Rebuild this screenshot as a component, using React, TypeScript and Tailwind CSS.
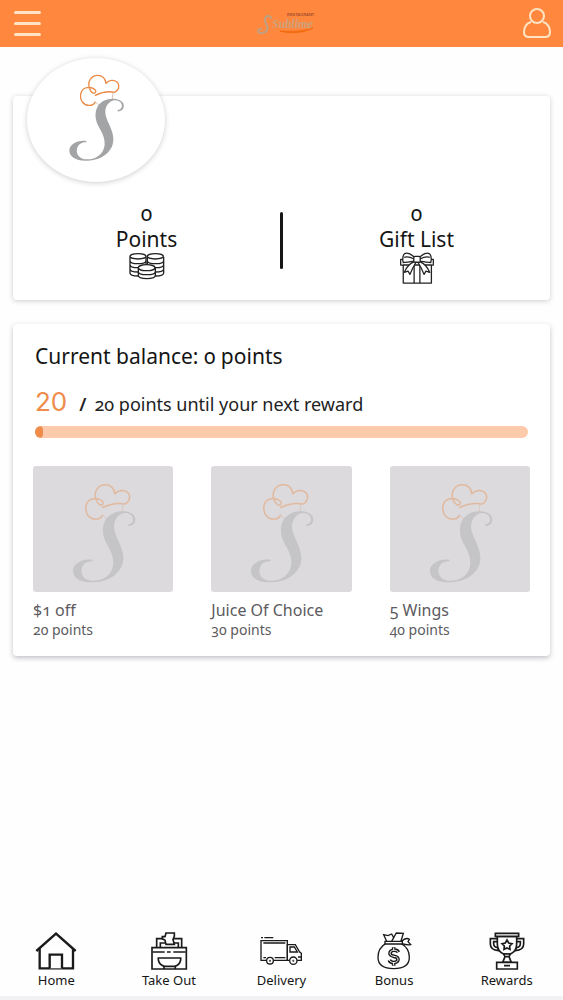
import React from 'react';

type Reward = {
  title: string;
  points: number;
};

type NavItem = {
  label: string;
  icon: React.ReactNode;
};

const rewards: Reward[] = [
  { title: '$1 off', points: 20 },
  { title: 'Juice Of Choice', points: 30 },
  { title: '5 Wings', points: 40 },
];

function ChefLogo({ className }: { className: string }) {
  return (
    <svg viewBox="20 25 177 270" className={className} fill="none" aria-hidden="true">
      <g stroke="#ea8a45" strokeWidth="4" strokeLinecap="round" strokeLinejoin="round">
        <path d="M104 113C97 126 76 125 66 112C56 96 60 72 80 69C94 67 109 74 106 82C102 90 92 84 88 72C80 52 92 32 112 32C127 32 135 42 137 56C145 46 163 43 172 54C180 65 174 78 163 83C145 79 122 84 105 92" />
        <path d="M158 84L156 102M103 110L116 122" strokeWidth="2" stroke="#c9a48a" />
      </g>
      <path
        fill="#a3a4a6"
        d="M172 140C186 142 194 128 189 116C180 100 150 98 130 108C108 120 103 142 107 165C112 190 134 205 133 240C130 268 108 284 80 284C58 284 46 268 50 252C54 238 64 233 78 233L78 229C55 224 28 238 27 256C26 276 46 288 75 288C110 289 140 275 154 248C164 225 158 205 147 180C136 158 130 140 140 122C150 104 172 102 182 114C188 124 184 134 172 136Z"
      />
    </svg>
  );
}

function BrandMark() {
  return (
    <svg viewBox="0 0 60 24" className="h-6 w-[60px]" role="img" aria-label="Restaurant logo">
      <path
        d="M15 6C15 3 9 3 9 8C9 12 13 14 11 18C9 22 2 22 2 19C2 17 4 17 5 17"
        fill="none"
        stroke="#bfa084"
        strokeWidth="2"
        strokeLinecap="round"
      />
      <path d="M24 19C34 22 48 21 57 16C50 19 36 20 24 19Z" fill="#f36c12" stroke="#f36c12" />
      <text x="16" y="16" fontSize="12" fontStyle="italic" fontWeight="700" fontFamily="Liberation Serif, serif" fill="#cda17c">
        Sublime
      </text>
      <text x="31" y="4" fontSize="4" fontWeight="700" fontFamily="Liberation Sans, sans-serif" fill="#a5502f">
        RESTAURANT
      </text>
    </svg>
  );
}

function CoinsIcon() {
  return (
    <svg viewBox="0 0 108 82" className="h-7 w-9" fill="#fff" stroke="#222" strokeWidth="4" aria-hidden="true">
      <path d="M3 13V62C3 74 51 74 51 62V13M3 25C3 37 51 37 51 25M3 37C3 49 51 49 51 37M3 50C3 62 51 62 51 50" />
      <ellipse cx="27" cy="12" rx="24" ry="8" />
      <path d="M55 13V62C55 74 104 74 104 62V13M55 25C55 37 104 37 104 25M55 37C55 49 104 49 104 37M55 50C55 62 104 62 104 50" />
      <ellipse cx="79" cy="12" rx="24" ry="8" />
      <path d="M28 46V69C28 82 79 82 79 69V46M28 58C28 70 79 70 79 58" />
      <ellipse cx="53" cy="46" rx="25" ry="9" />
    </svg>
  );
}

function GiftIcon() {
  return (
    <svg viewBox="0 0 108 100" className="h-8 w-9" fill="#fff" stroke="#222" strokeWidth="4" strokeLinejoin="round" aria-hidden="true">
      <path d="M11 40H99V97H11ZM3 23H105V41H3ZM45 23V97M63 23V97" />
      <path d="M46 17C36 6 22 1 16 5C9 10 9 24 11 33C22 32 37 31 46 28ZM62 17C72 6 86 1 92 5C99 10 99 24 97 33C86 32 71 31 62 28Z" />
      <path d="M14 17C24 13 35 17 45 22M94 17C84 13 73 17 63 22" />
      <path d="M45 30C31 36 20 49 14 64L26 60L32 70C38 54 44 43 51 32ZM63 30C77 36 88 49 94 64L82 60L76 70C70 54 64 43 57 32Z" />
      <rect x="44" y="14" width="20" height="18" rx="3" />
    </svg>
  );
}

function HomeIcon() {
  return (
    <g strokeWidth="7">
      <path d="M14 50V109H114V50" />
      <path d="M44 109V68H81V109" />
      <path d="M4 57L63 5L122 57" fill="none" />
    </g>
  );
}

function TakeOutIcon() {
  return (
    <g strokeWidth="5">
      <path d="M26 47V20H101V47M37 47V33H91V47" />
      <path d="M54 3H79V13L75 23L79 37H54L51 25L43 20V14H51Z" />
      <path d="M12 47H115V111H12Z" />
      <path d="M14 60H50M57 60H68M76 60H113" />
      <path d="M31 78H98V84C96 94 88 101 80 103H50C42 101 33 94 31 84Z" />
      <path d="M48 103V111M82 103V111" />
    </g>
  );
}

function DeliveryIcon() {
  return (
    <g strokeWidth="4">
      <path d="M3 17H9M13 17H40" />
      <path d="M3 26H82V85H3ZM10 33H76M10 77H18M44 77H76" />
      <path d="M82 38H106L119 60L124 64V85H82Z" />
      <path d="M90 45H103L112 60H90ZM114 75H123" />
      <circle cx="30" cy="86" r="10" />
      <circle cx="100" cy="86" r="11" />
      <circle cx="30" cy="86" r="1" />
      <circle cx="100" cy="86" r="1" />
    </g>
  );
}

function BonusIcon() {
  return (
    <g strokeWidth="4">
      <path d="M39 34C23 43 15 58 15 76C15 98 32 110 62 110C92 110 109 98 109 76C109 58 100 43 84 34Z" />
      <path d="M42 30L32 8L45 11L56 6L62 17L70 3L91 4L83 30Z" />
      <path d="M62 17L56 28" />
      <path d="M84 29C94 20 104 18 109 22L105 29L113 38C104 40 94 37 84 34Z" />
      <path d="M36 28H88V36H36Z" />
      <path
        d="M76 61C72 52 51 52 51 64C51 77 75 69 75 82C75 94 53 95 49 84M62 46V55M62 91V101"
        fill="none"
        strokeWidth="11"
      />
      <path
        d="M76 61C72 52 51 52 51 64C51 77 75 69 75 82C75 94 53 95 49 84M62 47V55M62 91V100"
        fill="none"
        stroke="#fff"
        strokeWidth="3"
      />
    </g>
  );
}

function RewardsIcon() {
  return (
    <g strokeWidth="5">
      <path d="M35 20H13V36C13 48 22 55 38 56L36 47C27 46 23 42 23 35V29H35M91 20H113V36C113 48 104 55 88 56L90 47C99 46 103 42 103 35V29H91" />
      <path d="M34 13H92V36C92 53 82 62 73 66H53C44 62 34 53 34 36Z" />
      <path d="M28 4H98V13H28Z" />
      <path d="M63 24L68 33L78 35L71 42L72 52L63 48L54 52L55 42L48 35L58 33Z" />
      <path d="M53 66H73L69 74L76 91H50L57 74ZM56 74H70" />
      <path d="M32 91H94V111H32ZM54 101H72" />
    </g>
  );
}

const navItems: NavItem[] = [
  { label: 'Home', icon: <HomeIcon /> },
  { label: 'Take Out', icon: <TakeOutIcon /> },
  { label: 'Delivery', icon: <DeliveryIcon /> },
  { label: 'Bonus', icon: <BonusIcon /> },
  { label: 'Rewards', icon: <RewardsIcon /> },
];

function Header() {
  return (
    <header className="flex h-[47px] items-center justify-between bg-[#ff883e] px-3">
      <button type="button" aria-label="Menu" className="flex w-10 flex-col gap-2 px-[2px]">
        <span className="h-[3px] w-[27px] rounded-full bg-[#ffe3c4]" />
        <span className="h-[3px] w-[27px] rounded-full bg-[#ffe3c4]" />
        <span className="h-[3px] w-[27px] rounded-full bg-[#ffe3c4]" />
      </button>
      <BrandMark />
      <button type="button" aria-label="Account" className="flex w-8 justify-end">
        <svg viewBox="0 0 28 32" className="h-8 w-7" fill="none" stroke="#ffe3c4" strokeWidth="2">
          <circle cx="14" cy="8" r="7" />
          <path d="M8 14C3 15 1 20 1 24C1 27 3 29 6 29H22C25 29 27 27 27 24C27 20 25 15 20 14" />
        </svg>
      </button>
    </header>
  );
}

function Stat({ value, label, icon }: { value: number; label: string; icon: React.ReactNode }) {
  return (
    <button type="button" className="flex flex-1 flex-col items-center text-[21px] leading-[26px] text-[#151515]">
      <span>{value}</span>
      <span>{label}</span>
      {icon}
    </button>
  );
}

export default function App() {
  return (
    <div className="flex min-h-screen flex-col bg-[#fefefe] font-['Noto_Sans','Open_Sans',sans-serif] oldstyle-nums">
      <Header />

      <main className="flex flex-col gap-6 px-[13px] pt-[49px]">
        <section className="rounded-sm bg-white pb-4 shadow-[0_1px_5px_rgba(60,50,70,0.25)]">
          <div className="-mt-[38px] ml-[14px] flex h-[124px] w-[138px] items-center justify-center rounded-[50%] bg-white pb-1 shadow-[0_1px_5px_rgba(60,50,70,0.25)]">
            <ChefLogo className="h-[90px] w-[59px]" />
          </div>
          <div className="mt-[18px] flex items-start">
            <Stat value={0} label="Points" icon={<CoinsIcon />} />
            <div className="mt-3 h-[57px] w-[3px] rounded-full bg-[#151515]" />
            <Stat value={0} label="Gift List" icon={<GiftIcon />} />
          </div>
        </section>

        <section className="rounded-sm bg-white px-5 pt-[18px] pb-4 shadow-[0_2px_5px_rgba(60,50,70,0.3)]">
          <h2 className="px-[2px] text-[21px] leading-7 text-[#151515]">Current balance: 0 points</h2>
          <p className="mt-4 flex items-baseline px-[2px] text-lg leading-8 text-[#222]">
            <span className="font-['Inter',sans-serif] text-[26px] leading-8 text-[#ed8c4b] lining-nums">20</span>
            <span className="ml-3 font-semibold">/</span>
            <span className="ml-2">20 points until your next reward</span>
          </p>
          <div
            role="progressbar"
            aria-label="Points until next reward"
            aria-valuenow={0}
            aria-valuemin={0}
            aria-valuemax={20}
            className="mx-[2px] mt-[6px] h-3 overflow-hidden rounded-full bg-[#fdcbac]"
          >
            <div className="h-full w-2 rounded-full bg-[#ed8c4b]" />
          </div>

          <ul className="mt-7 grid grid-cols-3 gap-[38px]">
            {rewards.map((reward) => (
              <li key={reward.title}>
                <div className="flex h-[126px] items-center justify-center rounded-[3px] bg-[#dcdadd] pt-2 pl-[2px]">
                  <ChefLogo className="h-[103px] w-[68px] opacity-40" />
                </div>
                <h3 className="mt-2 text-base leading-5 whitespace-nowrap text-[#5c5a5e]">{reward.title}</h3>
                <p className="text-sm leading-5 text-[#5c5a5e]">{reward.points} points</p>
              </li>
            ))}
          </ul>
        </section>
      </main>

      <nav className="mt-auto flex border-b-4 border-[#f2f1f3] pt-6 pb-[6px]">
        {navItems.map((item) => (
          <a key={item.label} href="#" className="flex flex-1 flex-col items-center text-[13px] leading-5 text-[#151515]">
            <svg viewBox="0 0 126 114" className="h-[38px] w-[42px]" fill="#fff" stroke="#1a1a1a" aria-hidden="true">
              {item.icon}
            </svg>
            {item.label}
          </a>
        ))}
      </nav>
    </div>
  );
}
